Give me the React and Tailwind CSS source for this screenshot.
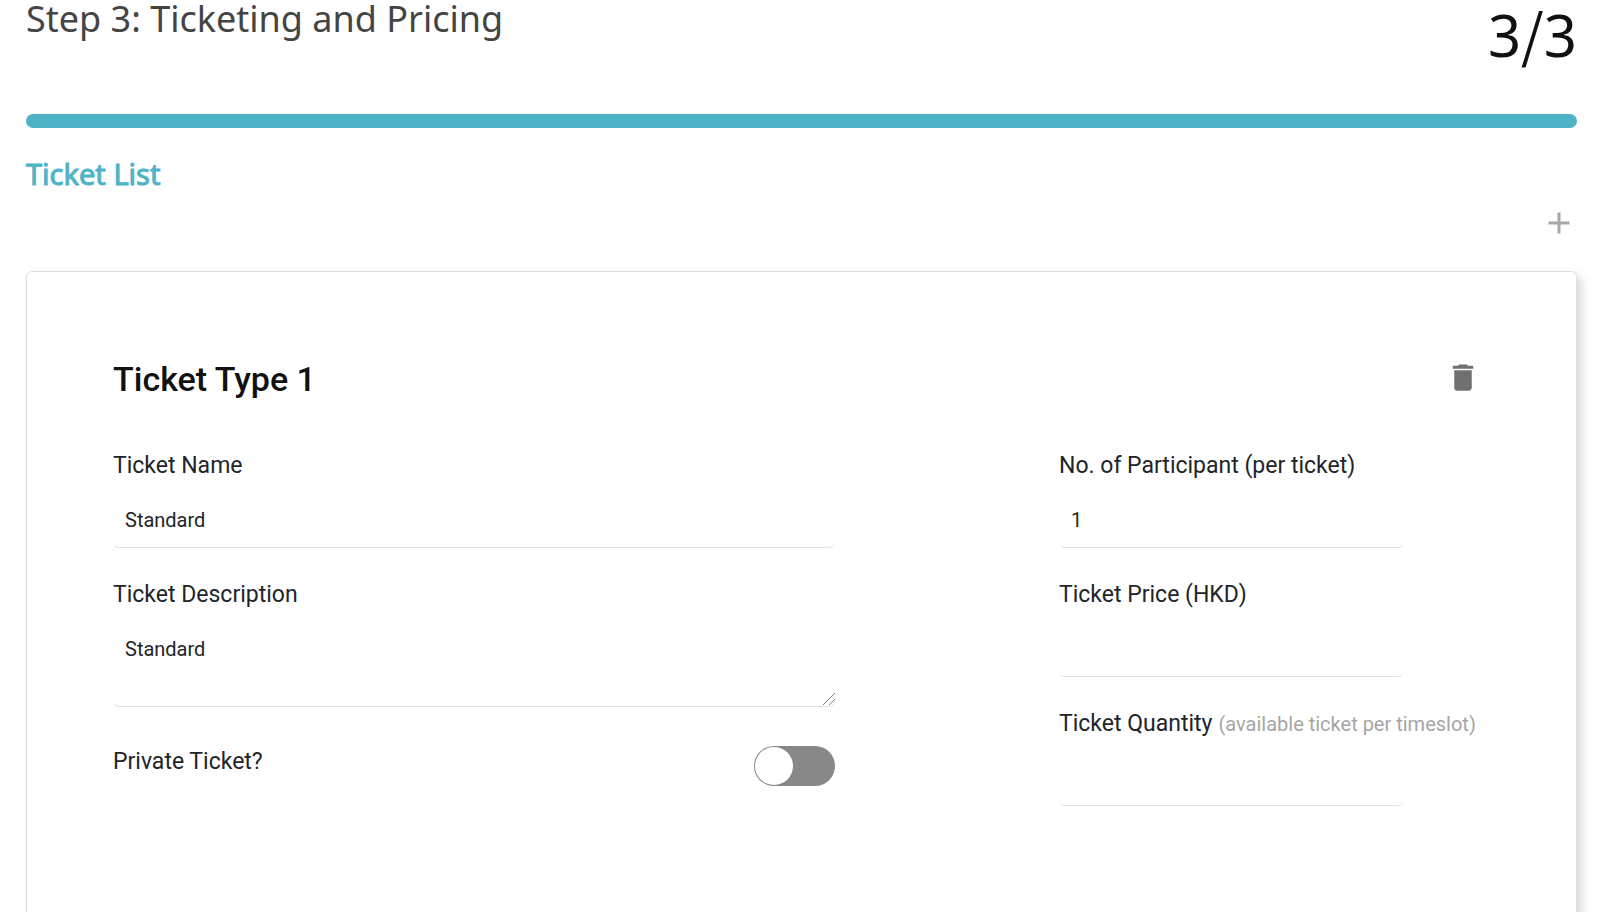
import React, { useState } from "react";

const labelClass = "block text-[23px] leading-8 text-[#212529]";
const fieldClass =
  "block w-full px-3 text-xl text-[#212529] bg-white border-b border-[#dee2e6] rounded-md focus:outline-none";

function Field({ id, label, hint, value, onChange }) {
  return (
    <div>
      <label htmlFor={id} className={labelClass + " whitespace-nowrap"}>
        {label}
        {hint && <span className="ml-1.5 text-xl text-[#a6a6a6]">{hint}</span>}
      </label>
      <input
        id={id}
        type="text"
        className={fieldClass + " mt-[10px] h-14"}
        value={value}
        onChange={onChange}
      />
    </div>
  );
}

function TicketCard() {
  const [ticket, setTicket] = useState({
    name: "Standard",
    description: "Standard",
    participants: "1",
    price: "",
    quantity: "",
    isPrivate: false,
  });

  const update = (key) => (e) => setTicket({ ...ticket, [key]: e.target.value });

  return (
    <section className="mt-[30px] px-[86px] pt-[84px] pb-40 border border-[#dedede] rounded-md shadow-[5px_5px_10px_rgba(0,0,0,0.15)]">
      <div className="flex items-start justify-between pr-[9px]">
        <h3 className="text-[34px] leading-[46px] font-medium text-[#111111]">Ticket Type 1</h3>
        <button type="button" aria-label="Delete ticket" className="mt-1 text-[#707070]">
          <svg className="h-[35px] w-9" viewBox="0 0 24 24" fill="currentColor">
            <path d="M6 19c0 1.1.9 2 2 2h8c1.1 0 2-.9 2-2V7H6v12zM19 4h-3.5l-1-1h-5l-1 1H5v2h14V4z" />
          </svg>
        </button>
      </div>

      <div className="mt-12 grid grid-cols-[722fr_431fr] gap-56">
        <div className="flex flex-col gap-[31px]">
          <Field id="name" label="Ticket Name" value={ticket.name} onChange={update("name")} />
          <div>
            <label htmlFor="description" className={labelClass}>
              Ticket Description
            </label>
            <div className="relative mt-[10px]">
              <textarea
                id="description"
                className={fieldClass + " h-[86px] pt-[14px] resize-none"}
                value={ticket.description}
                onChange={update("description")}
              />
              {/* Resize handle */}
              <svg
                className="absolute right-0 bottom-0.5 h-3 w-3 pointer-events-none"
                viewBox="0 0 12 12"
                fill="none"
                stroke="#808080"
              >
                <path d="M0 12L12 0M6 12L12 6" />
              </svg>
            </div>
          </div>
          <div className="mt-2 flex items-start justify-between">
            <label htmlFor="private" className={labelClass}>
              Private Ticket?
            </label>
            <input
              id="private"
              type="checkbox"
              role="switch"
              className="h-10 w-[81px] appearance-none rounded-full bg-[#888888] p-px cursor-pointer before:block before:h-[38px] before:w-[38px] before:rounded-full before:bg-white checked:bg-[#4fb3c8] checked:before:ml-10"
              checked={ticket.isPrivate}
              onChange={(e) => setTicket({ ...ticket, isPrivate: e.target.checked })}
            />
          </div>
        </div>

        <div className="flex flex-col gap-[31px] [&_input]:w-4/5">
          <Field
            id="participants"
            label="No. of Participant (per ticket)"
            value={ticket.participants}
            onChange={update("participants")}
          />
          <Field id="price" label="Ticket Price (HKD)" value={ticket.price} onChange={update("price")} />
          <Field
            id="quantity"
            label="Ticket Quantity"
            hint="(available ticket per timeslot)"
            value={ticket.quantity}
            onChange={update("quantity")}
          />
        </div>
      </div>
    </section>
  );
}

function App() {
  return (
    <main className="pl-[26px] pr-[23px] bg-white font-['Roboto',sans-serif]">
      <header className="flex h-[70px] items-start justify-between font-['Noto_Sans',sans-serif]">
        <h1 className="text-4xl leading-[38px] text-[#444444]">Step 3: Ticketing and Pricing</h1>
        <p className="text-[58px] leading-[64px] text-[#111111]">
          3<span className="font-['Noto_Sans_CJK_JP',sans-serif]">/</span>3
        </p>
      </header>

      <div
        role="progressbar"
        aria-label="Step 3 of 3"
        aria-valuenow={3}
        aria-valuemin={0}
        aria-valuemax={3}
        className="mt-11 h-[14px] rounded-full bg-[#4fb3c8]"
      />

      <h2 className="mt-6 text-[29px] leading-[44px] text-[#4fb3c8] font-['Noto_Sans',sans-serif] [-webkit-text-stroke:1px_#4fb3c8]">
        Ticket List
      </h2>

      <div className="mt-[9px] flex justify-end">
        <button type="button" aria-label="Add ticket" className="text-[#a8a8a8]">
          <svg className="h-9 w-9" viewBox="0 0 24 24" fill="currentColor">
            <path d="M19 13h-6v6h-2v-6H5v-2h6V5h2v6h6v2z" />
          </svg>
        </button>
      </div>

      <TicketCard />
    </main>
  );
}

export default App;
